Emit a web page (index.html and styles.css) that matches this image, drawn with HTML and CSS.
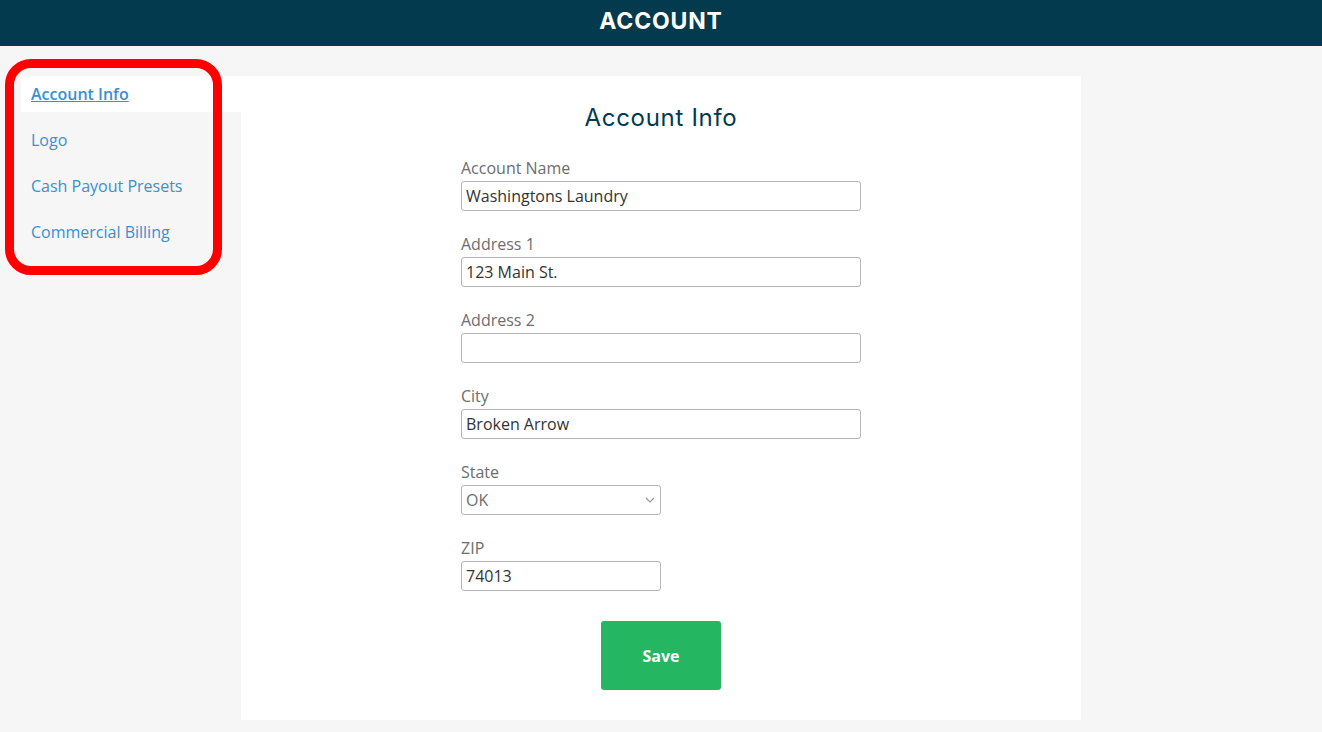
FILE: index.html
```html
<!DOCTYPE html>
<html lang="en">
<head>
  <meta charset="UTF-8">
  <title>Account</title>
  <meta name="viewport" content="width=device-width, initial-scale=1">
  <link rel="stylesheet" href="styles.css">
</head>
<body>

  <header class="topbar">ACCOUNT</header>

  <div class="layout">
    <nav class="sidenav">
      <a class="nav-item active" href="#">Account Info</a>
      <a class="nav-item" href="#">Logo</a>
      <a class="nav-item" href="#">Cash Payout Presets</a>
      <a class="nav-item" href="#">Commercial Billing</a>
      <div class="highlight-ring"></div>
    </nav>

    <main class="panel">
      <h1 class="panel-title">Account Info</h1>

      <form class="account-form">
        <div class="field">
          <label for="name">Account Name</label>
          <input type="text" id="name" value="Washingtons Laundry">
        </div>
        <div class="field">
          <label for="addr1">Address 1</label>
          <input type="text" id="addr1" value="123 Main St.">
        </div>
        <div class="field">
          <label for="addr2">Address 2</label>
          <input type="text" id="addr2" value="">
        </div>
        <div class="field">
          <label for="city">City</label>
          <input type="text" id="city" value="Broken Arrow">
        </div>
        <div class="field short">
          <label for="state">State</label>
          <div class="select-wrap">
            <select id="state">
              <option>OK</option>
            </select>
            <svg class="chevron" width="10" height="6" viewBox="0 0 10 6"><path d="M1 1l4 4 4-4" fill="none" stroke="#999" stroke-width="1.2"/></svg>
          </div>
        </div>
        <div class="field short">
          <label for="zip">ZIP</label>
          <input type="text" id="zip" value="74013">
        </div>

        <div class="actions">
          <button type="button" class="save-btn">Save</button>
        </div>
      </form>
    </main>
  </div>

</body>
</html>
```

FILE: styles.css
```css
body {
  margin: 0;
  background: #f6f6f6;
  font-family: "Open Sans", sans-serif;
  font-size: 16px;
}
.topbar {
  height: 46px;
  line-height: 42px;
  background: #033a4d;
  color: #fff;
  text-align: center;
  font-family: Inter, sans-serif;
  font-weight: 700;
  font-size: 23px;
  letter-spacing: 0.8px;
}
.layout {
  display: flex;
  margin: 30px 0 0 21px;
}
.sidenav {
  position: relative;
  width: 220px;
  display: flex;
  flex-direction: column;
}
.nav-item {
  display: block;
  height: 36px;
  line-height: 36px;
  padding-left: 10px;
  margin-bottom: 10px;
  color: #3a8fd4;
  text-decoration: none;
}
.nav-item.active {
  background: #fff;
  font-weight: 600;
  text-decoration: underline;
}
.highlight-ring {
  position: absolute;
  left: -16px;
  top: -17px;
  width: 199px;
  height: 198px;
  border: 9px solid #ff0000;
  border-radius: 26px;
  pointer-events: none;
}
.panel {
  width: 840px;
  background: #fff;
  padding: 27px 0 30px;
}
.panel-title {
  margin: 0 0 24px;
  text-align: center;
  font-family: Inter, sans-serif;
  font-weight: 400;
  font-size: 24px;
  line-height: 30px;
  letter-spacing: 0.7px;
  color: #033a4d;
}
.account-form {
  width: 400px;
  margin: 0 auto;
}
.field {
  margin-bottom: 22px;
}
.field label {
  display: block;
  line-height: 22px;
  margin-bottom: 2px;
  color: #6d6d6d;
}
.field input,
.field select {
  box-sizing: border-box;
  width: 100%;
  height: 30px;
  padding: 0 4px;
  border: 1px solid #b5b5b5;
  border-radius: 3px;
  font-family: "Open Sans", sans-serif;
  font-size: 16px;
  color: #333;
  background: #fff;
}
.field.short input,
.field.short .select-wrap {
  width: 200px;
}
.select-wrap {
  position: relative;
}
.field select {
  -webkit-appearance: none;
  appearance: none;
  color: #6d6d6d;
}
.chevron {
  position: absolute;
  right: 6px;
  top: 12px;
}
.actions {
  display: flex;
  justify-content: center;
  padding-top: 8px;
}
.save-btn {
  width: 120px;
  height: 69px;
  border: none;
  border-radius: 3px;
  background: #25b662;
  color: #fff;
  font-family: "Open Sans", sans-serif;
  font-weight: 700;
  font-size: 16px;
  cursor: pointer;
}
```
